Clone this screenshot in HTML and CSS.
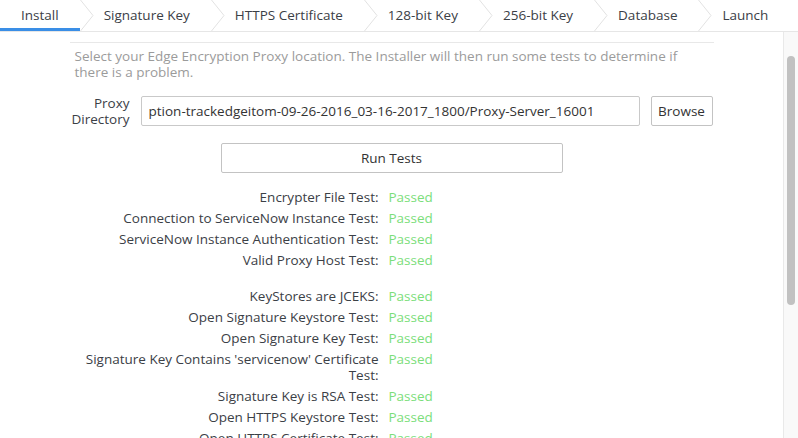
FILE: index.html
```html
<!DOCTYPE html>
<html>
<head>
<meta charset="utf-8">
<link rel="stylesheet" href="styles.css">
</head>
<body>
<div class="app">
  <nav class="tabs">
    <div class="tab tab-first active">Install</div>
    <svg class="chev" viewBox="0 0 14 31"><polyline points="0.5,0 13,15.5 0.5,31"/></svg>
    <div class="tab">Signature Key</div>
    <svg class="chev" viewBox="0 0 14 31"><polyline points="0.5,0 13,15.5 0.5,31"/></svg>
    <div class="tab">HTTPS Certificate</div>
    <svg class="chev" viewBox="0 0 14 31"><polyline points="0.5,0 13,15.5 0.5,31"/></svg>
    <div class="tab">128-bit Key</div>
    <svg class="chev" viewBox="0 0 14 31"><polyline points="0.5,0 13,15.5 0.5,31"/></svg>
    <div class="tab">256-bit Key</div>
    <svg class="chev" viewBox="0 0 14 31"><polyline points="0.5,0 13,15.5 0.5,31"/></svg>
    <div class="tab">Database</div>
    <svg class="chev" viewBox="0 0 14 31"><polyline points="0.5,0 13,15.5 0.5,31"/></svg>
    <div class="tab">Launch</div>
  </nav>
  <div class="body">
    <main class="content">
      <section class="panel">
        <p class="desc">Select your Edge Encryption Proxy location. The Installer will then run some tests to determine if there is a problem.</p>
        <div class="proxy-row">
          <label class="proxy-label">Proxy<br>Directory</label>
          <div class="field">ption-trackedgeitom-09-26-2016_03-16-2017_1800/Proxy-Server_16001</div>
          <button class="btn browse">Browse</button>
        </div>
        <div class="run-wrap"><button class="btn run">Run Tests</button></div>
        <div class="tests">
          <div class="lbl">Encrypter File Test:</div><div class="ok">Passed</div>
          <div class="lbl">Connection to ServiceNow Instance Test:</div><div class="ok">Passed</div>
          <div class="lbl">ServiceNow Instance Authentication Test:</div><div class="ok">Passed</div>
          <div class="lbl">Valid Proxy Host Test:</div><div class="ok">Passed</div>
        </div>
        <div class="tests group2">
          <div class="lbl">KeyStores are JCEKS:</div><div class="ok">Passed</div>
          <div class="lbl">Open Signature Keystore Test:</div><div class="ok">Passed</div>
          <div class="lbl">Open Signature Key Test:</div><div class="ok">Passed</div>
          <div class="lbl">Signature Key Contains 'servicenow' Certificate Test:</div><div class="ok">Passed</div>
          <div class="lbl">Signature Key is RSA Test:</div><div class="ok">Passed</div>
          <div class="lbl">Open HTTPS Keystore Test:</div><div class="ok">Passed</div>
          <div class="lbl">Open HTTPS Certificate Test:</div><div class="ok">Passed</div>
          <div class="lbl">HTTPS Key is RSA Test:</div><div class="ok">Passed</div>
        </div>
      </section>
    </main>
    <div class="scrollbar"><div class="thumb"></div></div>
  </div>
</div>
</body>
</html>
```
FILE: styles.css
```css
* { box-sizing: border-box; }
html, body { margin: 0; padding: 0; height: 100%; overflow: hidden; background: #fff; }
body {
  font-family: "Open Sans", "Liberation Sans", sans-serif;
  font-size: 13.5px;
  color: #3b4046;
}
.app { display: flex; flex-direction: column; height: 100%; }
.tabs {
  display: flex;
  align-items: stretch;
  height: 32px;
  border-bottom: 1px solid #e6e6e6;
  flex: none;
}
.tab {
  display: flex;
  align-items: center;
  padding: 0 21px 1px 10px;
  white-space: nowrap;
  color: #3b4046;
}
.tab-first { padding-left: 21px; }
.tab.active { box-shadow: inset 0 -3px 0 #3a8ee6; }
.chev { width: 14px; height: 31px; flex: none; }
.chev polyline { fill: none; stroke: #e2e2e2; stroke-width: 1; }
.body { flex: 1; display: flex; min-height: 0; }
.content { flex: 1; min-width: 0; overflow: hidden; }
.panel {
  width: 644px;
  margin: 10px auto 0;
  border-top: 1px solid #e8e8e8;
  padding-top: 5px;
}
.desc {
  margin: 0;
  padding-left: 5px;
  color: #9b9b9b;
  line-height: 16px;
}
.proxy-row {
  display: flex;
  align-items: center;
  margin-top: 15px;
}
.proxy-label {
  width: 60px;
  text-align: right;
  line-height: 16px;
  margin-right: 11px;
}
.field {
  width: 499px;
  height: 30px;
  border: 1px solid #c9c9c9;
  border-radius: 2px;
  padding: 0 7px;
  display: flex;
  align-items: center;
  white-space: nowrap;
  overflow: hidden;
  color: #333;
}
.btn {
  font: inherit;
  color: #333;
  background: #fff;
  border: 1px solid #c3c3c3;
  border-radius: 2px;
  height: 30px;
  padding: 0;
}
.browse { width: 62px; margin-left: 11px; }
.run-wrap { display: flex; justify-content: center; margin-top: 16px; }
.run { width: 342px; }
.tests {
  display: grid;
  grid-template-columns: 309px auto;
  column-gap: 10px;
  margin-top: 13px;
  line-height: 16px;
}
.tests > div { padding: 2.5px 0; }
.group2 { margin-top: 15px; }
.lbl { text-align: right; }
.ok { color: #7bde7b; }
.scrollbar {
  width: 15px;
  flex: none;
  background: #f9f9f9;
  border-left: 1px solid #e9e9e9;
  padding: 24px 0 0 3px;
}
.thumb {
  width: 8px;
  height: 249px;
  background: #c1c1c1;
  border-radius: 4px;
}
```
